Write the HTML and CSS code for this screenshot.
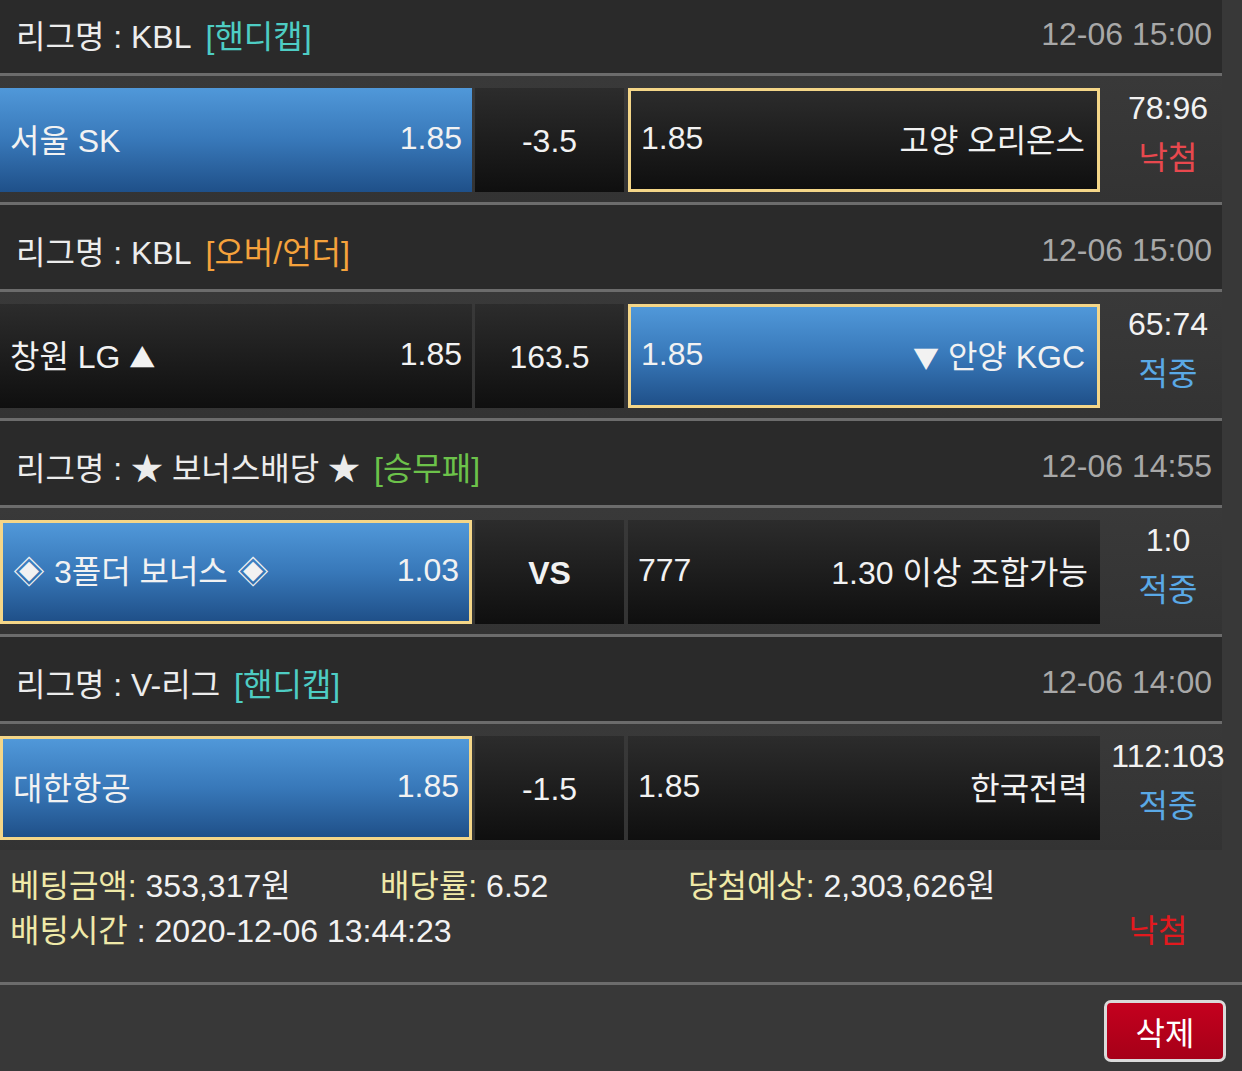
FILE: index.html
```html
<!DOCTYPE html>
<html lang="ko">
<head>
    <meta charset="UTF-8">
    <meta name="viewport" content="width=device-width, initial-scale=1.0">
    <title>배팅내역</title>
    <link rel="stylesheet" href="styles.css">
</head>
<body>
    <div class="bet">
        <div class="game">
            <div class="league">
                <span class="league-name">리그명 : KBL</span>
                <span class="tag tag-handi">[핸디캡]</span>
                <span class="time">12-06 15:00</span>
            </div>
            <div class="match">
                <div class="odd odd-home is-bet"><span>서울 SK</span><span>1.85</span></div>
                <div class="odd-mid">-3.5</div>
                <div class="odd odd-away is-win"><span>1.85</span><span>고양 오리온스</span></div>
                <div class="score"><span>78:96</span><span class="status lose">낙첨</span></div>
            </div>
        </div>

        <div class="game">
            <div class="league">
                <span class="league-name">리그명 : KBL</span>
                <span class="tag tag-ou">[오버/언더]</span>
                <span class="time">12-06 15:00</span>
            </div>
            <div class="match">
                <div class="odd odd-home"><span>창원 LG <span class="arrow">▲</span></span><span>1.85</span></div>
                <div class="odd-mid">163.5</div>
                <div class="odd odd-away is-bet is-win"><span>1.85</span><span><span class="arrow">▼</span> 안양 KGC</span></div>
                <div class="score"><span>65:74</span><span class="status win">적중</span></div>
            </div>
        </div>

        <div class="game">
            <div class="league">
                <span class="league-name">리그명 : ★ 보너스배당 ★</span>
                <span class="tag tag-wdl">[승무패]</span>
                <span class="time">12-06 14:55</span>
            </div>
            <div class="match">
                <div class="odd odd-home is-bet is-win"><span>◈ 3폴더 보너스 ◈</span><span>1.03</span></div>
                <div class="odd-mid vs">VS</div>
                <div class="odd odd-away"><span>777</span><span>1.30 이상 조합가능</span></div>
                <div class="score"><span>1:0</span><span class="status win">적중</span></div>
            </div>
        </div>

        <div class="game last">
            <div class="league">
                <span class="league-name">리그명 : V-리그</span>
                <span class="tag tag-handi">[핸디캡]</span>
                <span class="time">12-06 14:00</span>
            </div>
            <div class="match">
                <div class="odd odd-home is-bet is-win"><span>대한항공</span><span>1.85</span></div>
                <div class="odd-mid">-1.5</div>
                <div class="odd odd-away"><span>1.85</span><span>한국전력</span></div>
                <div class="score"><span>112:103</span><span class="status win">적중</span></div>
            </div>
        </div>

        <div class="summary">
            <div><span class="label">베팅금액:</span> 353,317원</div>
            <div><span class="label">배당률:</span> 6.52</div>
            <div><span class="label">당첨예상:</span> 2,303,626원</div>
            <div></div>
            <div class="wide"><span class="label">배팅시간</span> : 2020-12-06 13:44:23</div>
            <div class="result">낙첨</div>
        </div>

        <div class="actions">
            <button class="btn-delete">삭제</button>
        </div>
    </div>
</body>
</html>
```

FILE: styles.css
```css
body {
    margin: 0;
    background-color: #383838;
    color: #f2f2f2;
    font-family: "Liberation Sans", "Noto Sans CJK KR", sans-serif;
    font-size: 32px;
    overflow: hidden;
}
.bet {
    margin-top: -11px;
}
.game {
    width: 1222px;
    border-bottom: 3px solid #6c6c6c;
}
.game.last {
    border-bottom: none;
}
.league {
    height: 78px;
    display: flex;
    align-items: center;
    padding: 6px 10px 0 16px;
    background-color: #2a2a2a;
    border-bottom: 3px solid #6c6c6c;
    color: #ececec;
}
.tag {
    margin-left: 14px;
}
.tag-handi {
    color: #4ecdc4;
}
.tag-ou {
    color: #f5a23c;
}
.tag-wdl {
    color: #6cc24a;
}
.time {
    margin-left: auto;
    color: #a8a8a8;
}
.match {
    display: flex;
    gap: 3px;
    padding: 12px 0 10px;
    background: linear-gradient(#393939, #333333);
}
.odd,
.odd-mid {
    flex: none;
    height: 104px;
    box-sizing: border-box;
    display: flex;
    align-items: center;
    background: linear-gradient(#2c2c2c, #0f0f0f);
}
.odd {
    width: 472px;
    justify-content: space-between;
    padding: 0 10px 4px;
}
.odd-mid {
    width: 149px;
    justify-content: center;
    padding-top: 2px;
}
.odd-away {
    margin-left: 1px;
    padding-right: 12px;
}
.odd.is-bet {
    background: linear-gradient(#5098d9, #3878b9 50%, #1f5089);
}
.odd.is-win {
    border: 3px solid #f4d688;
}
.arrow {
    font-family: "Noto Sans CJK KR", sans-serif;
    font-size: 26px;
}
.vs {
    font-weight: bold;
}
.score {
    flex: none;
    width: 130px;
    display: flex;
    flex-direction: column;
    align-items: center;
    line-height: 47px;
    margin-top: -3px;
    white-space: nowrap;
}
.status {
    margin-top: 3px;
}
.lose {
    color: #e8484e;
}
.win {
    color: #5aa9e6;
}
.summary {
    display: grid;
    grid-template-columns: 370px 308px 1fr 128px;
    line-height: 45px;
    padding: 14px 0 28px 10px;
    box-sizing: border-box;
    border-bottom: 3px solid #6c6c6c;
    width: 100%;
}
.summary .wide {
    grid-column: 1 / 4;
}
.label {
    color: #efe9a8;
}
.result {
    color: #e3191e;
    text-align: center;
    margin-right: 40px;
}
.actions {
    display: flex;
    justify-content: flex-end;
    padding: 15px 16px 0 0;
}
.btn-delete {
    width: 122px;
    height: 62px;
    border: 3px solid #dadada;
    border-radius: 7px;
    background: linear-gradient(#c4001e, #a60018);
    color: #fff;
    font-family: "Liberation Sans", "Noto Sans CJK KR", sans-serif;
    font-size: 32px;
    padding: 0;
}
```
